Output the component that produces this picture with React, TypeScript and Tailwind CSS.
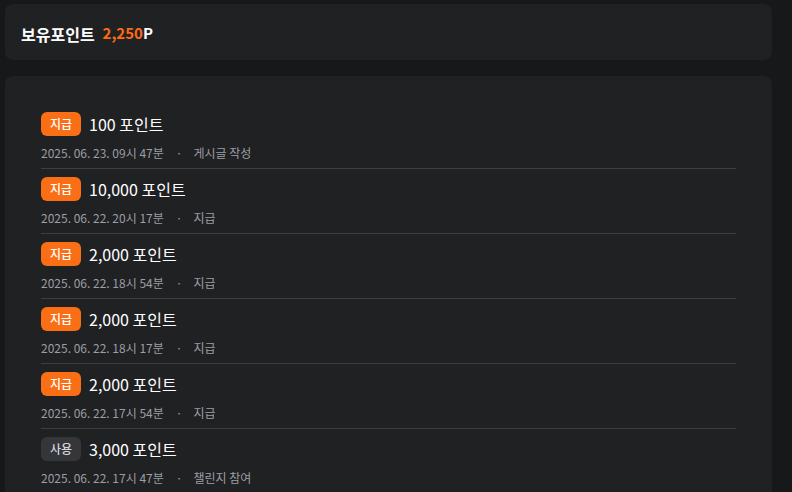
import React from 'react';

type PointItem = {
  type: 'earn' | 'use';
  amount: string;
  date: string;
  reason: string;
};

const items: PointItem[] = [
  { type: 'earn', amount: '100', date: '2025. 06. 23. 09시 47분', reason: '게시글 작성' },
  { type: 'earn', amount: '10,000', date: '2025. 06. 22. 20시 17분', reason: '지급' },
  { type: 'earn', amount: '2,000', date: '2025. 06. 22. 18시 54분', reason: '지급' },
  { type: 'earn', amount: '2,000', date: '2025. 06. 22. 18시 17분', reason: '지급' },
  { type: 'earn', amount: '2,000', date: '2025. 06. 22. 17시 54분', reason: '지급' },
  { type: 'use', amount: '3,000', date: '2025. 06. 22. 17시 47분', reason: '챌린지 참여' },
];

function PointRow({ item }: { item: PointItem }) {
  return (
    <li className="border-b border-[#3d3e42] pt-2 pb-1.5">
      <div className="flex items-center gap-2 h-6">
        {item.type === 'earn' ? (
          <span className="h-6 w-10 flex items-center justify-center rounded-md bg-[#fa6f16] text-white text-[12px] font-medium">
            지급
          </span>
        ) : (
          <span className="h-6 w-10 flex items-center justify-center rounded-md bg-[#35363a] text-[#d4d5d8] text-[12px] font-medium">
            사용
          </span>
        )}
        <span className="text-white text-[16px] font-normal leading-6">{item.amount} 포인트</span>
      </div>
      <div className="mt-2 flex items-center text-[12px] leading-[18px] text-[#9c9ea3]">
        <span>{item.date}</span>
        <span className="ml-[12px] mr-[11px]">·</span>
        <span>{item.reason}</span>
      </div>
    </li>
  );
}

export default function App() {
  return (
    <div
      className="h-[492px] overflow-hidden bg-[#17181a] pl-[5px] pr-[20px] pt-[4px]"
      style={{ fontFamily: '"Noto Sans CJK KR", "Noto Sans", sans-serif' }}
    >
      <div className="h-[56px] rounded-lg bg-[#202123] px-4 pt-[3px] flex items-center gap-2">
        <span className="text-white text-[16px] font-bold">보유포인트</span>
        <span className="text-[15px] font-bold">
          <span className="text-[#ff6a13]">2,250</span>
          <span className="text-white">P</span>
        </span>
      </div>
      <div className="mt-[16px] rounded-lg bg-[#202123] pt-7 px-9 pb-6">
        <ul>
          {items.map((item, i) => (
            <PointRow key={i} item={item} />
          ))}
        </ul>
      </div>
    </div>
  );
}
